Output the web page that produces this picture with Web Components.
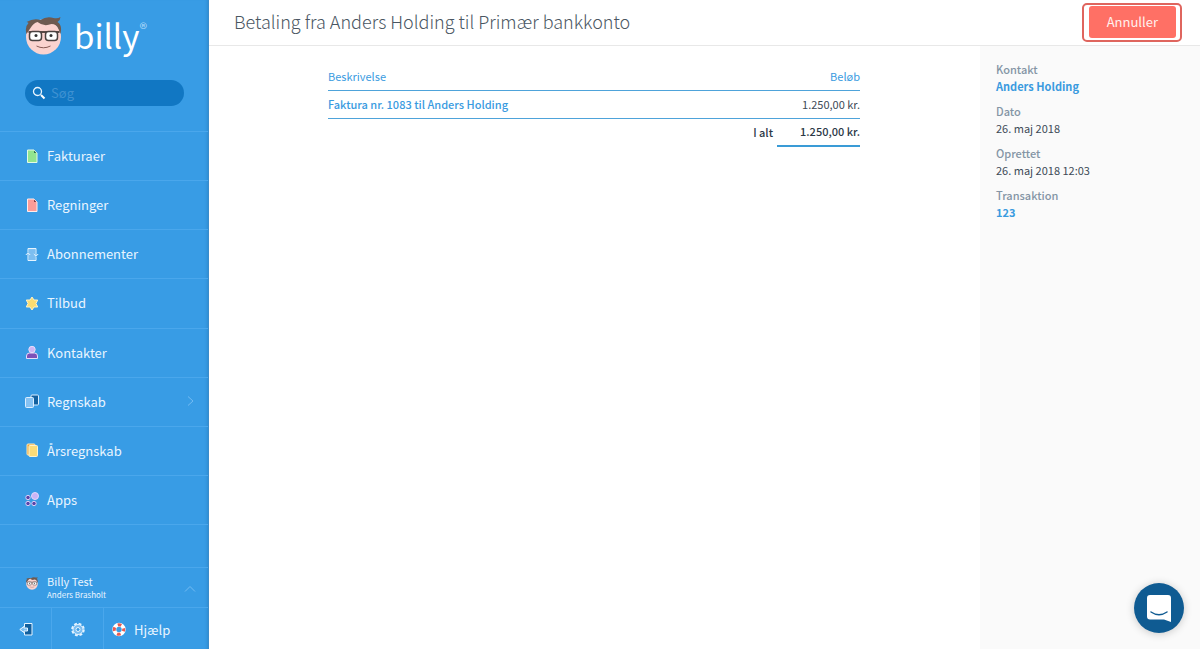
<!DOCTYPE html>
<html lang="da">
<head>
<meta charset="utf-8">
<title>Billy</title>
<meta name="viewport" content="width=device-width, initial-scale=1">
<style>
  html, body { margin: 0; height: 100%; }
  body {
    font-family: "Noto Sans CJK SC", "Noto Sans", sans-serif;
    font-size: 11px;
    line-height: 16px;
    color: #3d4a57;
    background: #fff;
    --blue: #389ce5;
    --divider: #4aa7ec;
    --link: #3a9bdf;
  }
</style>
</head>
<body>
<billy-app></billy-app>

<script>
const define = (name, html, setup) => {
  const template = document.createElement('template');
  template.innerHTML = html;
  customElements.define(name, class extends HTMLElement {
    connectedCallback() {
      if (this.shadowRoot) return;
      this.attachShadow({ mode: 'open' }).append(template.content.cloneNode(true));
      if (setup) setup(this, this.shadowRoot);
    }
  });
};

const face = `
  <circle cx="18" cy="20" r="17.5" fill="#fbd3cf"/>
  <path d="M1 17 Q-1 10 3 6 Q2 5 1 5 Q8 1 15 3 Q21 -1 28 1 Q32 2 35 0 Q35 3 32 5 Q37 8 35 17 L33 12 Q31 7 26 7 Q18 10 12 5 Q8 6 5 11 Z" fill="#6e5a50"/>
  <path d="M3 15 H34" stroke="#5a4a45" stroke-width="2"/>
  <rect x="4" y="14.500" width="12" height="9" rx="3" fill="#fff" stroke="#4b4240" stroke-width="1.500"/>
  <rect x="20" y="14.500" width="12" height="9" rx="3" fill="#fff" stroke="#4b4240" stroke-width="1.500"/>
  <circle cx="10.500" cy="18.500" r="1.500" fill="#333"/><circle cx="25.500" cy="18.500" r="1.500" fill="#333"/>
  <path d="M11 29 Q18 32.500 25 29" fill="none" stroke="#8a5c56" stroke-width="1"/>`;

const icons = {
  invoice: `<path d="M2.500 1 H9 L12 4 V13.500 H2.500 Z" fill="#92e58f" stroke="#e4fbe4" stroke-linejoin="round"/><path d="M9 1.500 V4 H11.500 Z" fill="#2f6f55"/>`,
  bill: `<path d="M2.500 1 H9 L12 4 V13.500 H2.500 Z" fill="#fb9c98" stroke="#ffeceb" stroke-linejoin="round"/><path d="M9 1.500 V4 H11.500 Z" fill="#7a3c46"/>`,
  subscription: `<path d="M3 5.500 V1.500 H11 V4 M3 11 V13.500 H11 V9.500" fill="#8cc8f4" stroke="#e6f4ff"/><rect x="3.500" y="2.500" width="7" height="10.500" fill="#7dbef0"/><path d="M3 11 V6 M.8 8 L3 5.800 L5.200 8 M11 4 V9 M8.800 7 L11 9.200 L13.200 7" fill="none" stroke="#e6f4ff"/>`,
  star: `<path d="M7 1 L9 4 H12.700 L11 7.500 L12.700 11 H9 L7 14 L5 11 H1.300 L3 7.500 L1.300 4 H5 Z" fill="#fbdc71" stroke="#fff2c4" stroke-linejoin="round"/>`,
  contact: `<path d="M1.500 13.500 V11 Q1.500 8 4.500 8 H9.500 Q12.500 8 12.500 11 V13.500 Z" fill="#7d50b8" stroke="#e6dcfa"/><circle cx="7" cy="4.500" r="3.200" fill="#cdb7f5" stroke="#e6dcfa"/>`,
  ledger: `<rect x="6" y="1" width="7.500" height="10" rx="1" fill="#12609f" stroke="#dceeff"/><rect x=".5" y="3.500" width="8" height="10" rx="1" fill="#86c2f2" stroke="#dceeff"/>`,
  annual: `<rect x="2" y="1" width="8" height="11" rx="1" fill="#e8a33c" stroke="#ffe9b0"/><rect x="4" y="2.500" width="8.500" height="11" rx="1" fill="#fbdc78" stroke="#fff2cc"/>`,
  apps: `<g fill="#5a44a8" stroke="#d9d0f7"><circle cx="3" cy="5.500" r="2.200"/><circle cx="3" cy="11.500" r="2.200"/><circle cx="9" cy="11.500" r="2.200"/></g><circle cx="10" cy="4" r="3.500" fill="#c9b4f6" stroke="#e2d8fb"/>`,
  search: `<circle cx="5.500" cy="5.500" r="4" fill="none" stroke="#e8f5ff" stroke-width="1.300"/><path d="M9 9 L12.500 12.500" stroke="#fff" stroke-width="2"/>`,
  logout: `<path d="M5.500 5 V1.500 H13 V13 H5.500 V10" fill="#12609f" stroke="#e6f4ff"/><path d="M.8 7.500 L5 4.500 V6 H8.500 V9 H5 V10.500 Z" fill="#7dbef0" stroke="#e6f4ff" stroke-linejoin="round"/>`,
  gear: `<circle cx="7" cy="7.500" r="5.800" fill="none" stroke="#e6f4ff" stroke-width="2" stroke-dasharray="2.800 1.750"/><circle cx="7" cy="7.500" r="5" fill="#7dbef0" stroke="#e6f4ff"/><circle cx="7" cy="7.500" r="2" fill="#389ce5" stroke="#e6f4ff"/>`,
  help: `<circle cx="7" cy="7.500" r="4.700" fill="none" stroke="#fff" stroke-width="4"/><circle cx="7" cy="7.500" r="4.700" fill="none" stroke="#ea5a50" stroke-width="3" stroke-dasharray="3.700 3.680" stroke-dashoffset="1.850" transform="rotate(0 7 7.500)"/>`,
  right: `<path d="M5 2.500 L10 7 L5 11.500" fill="none" stroke="#73bcf3"/>`,
  up: `<path d="M2 9.500 L7 4.500 L12 9.500" fill="none" stroke="#73bcf3"/>`
};

define('ui-icon', `
  <style>:host { display: block; width: 14px; height: 15px; flex: none; } svg { display: block; width: 100%; height: 100%; }</style>
  <svg viewBox="0 0 14 15" aria-hidden="true"></svg>`,
  (host, root) => { root.querySelector('svg').innerHTML = icons[host.getAttribute('name')]; });

define('billy-face', `
  <style>:host { display: block; flex: none; } svg { display: block; width: 100%; height: 100%; }</style>
  <svg viewBox="0 0 36 38" aria-hidden="true">${face}</svg>`);

const icon = name => {
  const element = document.createElement('ui-icon');
  element.setAttribute('name', name);
  return element;
};

define('nav-item', `
  <style>
    :host { display: block; border-bottom: 1px solid var(--divider); }
    a { display: flex; align-items: center; gap: 8px; height: 100%; padding: 0 11px 0 25px; box-sizing: border-box; color: inherit; text-decoration: none; }
    .text { flex: 1; }
  </style>
  <a href="#"><span class="text"><slot></slot></span></a>`,
  (host, root) => {
    const link = root.querySelector('a');
    link.prepend(icon(host.getAttribute('icon')));
    if (host.hasAttribute('expandable')) link.append(icon('right'));
  });

define('search-box', `
  <style>
    :host { display: block; }
    label { display: flex; align-items: center; gap: 5px; height: 26px; padding: 0 12px 0 7px; border-radius: 13px; background: #1177c3; }
    input { flex: 1; min-width: 0; padding: 0; border: 0; outline: 0; background: none; font: inherit; color: #fff; }
    input::placeholder { color: #3f92d2; opacity: 1; }
  </style>
  <label><ui-icon name="search"></ui-icon><input type="search" placeholder="Søg" aria-label="Søg"></label>`);

define('side-bar', `
  <style>
    :host { display: flex; flex-direction: column; background: var(--blue); color: #e9f5ff; font-size: 13px; line-height: 20px; border-right: 1px solid #3a8ccb; box-shadow: inset -3px 0 3px -2px #2f8bd0; }
    .brand { display: flex; align-items: center; gap: 12px; height: 44px; padding: 14px 25px 0; color: #fff; text-decoration: none; }
    billy-face { width: 37px; height: 38px; }
    .name { padding-bottom: 2px; font-size: 33px; line-height: 44px; }
    .name sup { font-size: 16px; line-height: 0; vertical-align: 14px; color: #a8d6f8; }
    search-box { margin: 22px 24px 25px 25px; }
    nav { display: grid; grid-auto-rows: 1fr; height: 393px; flex: none; border-top: 1px solid var(--divider); }
    footer { margin-top: auto; }
    .user { display: flex; align-items: center; gap: 8px; width: 100%; height: 40px; padding: 0 11px 0 25px; border: 0; border-top: 1px solid var(--divider); background: none; color: inherit; font: inherit; text-align: left; }
    .user billy-face { width: 12px; height: 13px; padding: 0 1px 8px; }
    .user ui-icon { padding-top: 4px; }
    .who { flex: 1; font-size: 11px; line-height: 14px; }
    .who small { display: block; font-size: 8px; line-height: 13px; }
    .tools { display: grid; grid-template-columns: 51px 52px 1fr; height: 41px; border-top: 1px solid var(--divider); }
    .tools a { display: flex; align-items: center; justify-content: center; gap: 8px; padding-top: 2px; color: inherit; text-decoration: none; }
    .tools a + a { border-left: 1px solid var(--divider); }
    .tools a:last-child { justify-content: flex-start; padding-left: 8px; }
  </style>
  <a class="brand" href="#"><billy-face></billy-face><span class="name">billy<sup>®</sup></span></a>
  <search-box></search-box>
  <nav aria-label="Menu">
    <nav-item icon="invoice">Fakturaer</nav-item>
    <nav-item icon="bill">Regninger</nav-item>
    <nav-item icon="subscription">Abonnementer</nav-item>
    <nav-item icon="star">Tilbud</nav-item>
    <nav-item icon="contact">Kontakter</nav-item>
    <nav-item icon="ledger" expandable>Regnskab</nav-item>
    <nav-item icon="annual">Årsregnskab</nav-item>
    <nav-item icon="apps">Apps</nav-item>
  </nav>
  <footer>
    <button class="user" type="button"><billy-face></billy-face><span class="who">Billy Test<small>Anders Brasholt</small></span><ui-icon name="up"></ui-icon></button>
    <div class="tools">
      <a href="#" aria-label="Log ud"><ui-icon name="logout"></ui-icon></a>
      <a href="#" aria-label="Indstillinger"><ui-icon name="gear"></ui-icon></a>
      <a href="#"><ui-icon name="help"></ui-icon>Hjælp</a>
    </div>
  </footer>`);

define('page-header', `
  <style>
    :host { display: flex; align-items: center; justify-content: space-between; height: 45px; padding: 0 18px 0 25px; border-bottom: 1px solid #e8e8e8; }
    h1 { margin: 0; padding-bottom: 3px; font-size: 18px; line-height: 26px; font-weight: 300; color: #4a5662; }
  </style>
  <h1><slot></slot></h1><slot name="action"></slot>`);

define('danger-button', `
  <style>
    :host { display: block; padding: 1px 4px 2px 5px; border: 2px solid #df655e; border-radius: 5px; }
    button { display: block; height: 32px; padding: 0 18px; border: 0; border-radius: 3px; background: #ff7065; color: #fff0ee; font: inherit; font-size: 13px; line-height: 32px; }
  </style>
  <button type="button"><slot></slot></button>`);

define('payment-table', `
  <style>
    :host { display: block; padding: 17px 25px 17px 24px; }
    table { width: 100%; max-width: 532px; margin: 0 auto; border-collapse: collapse; }
    th, td { height: 25px; padding: 0 0 2px; text-align: left; font-weight: 400; }
    thead th { color: var(--link); }
    thead th, tbody td { border-bottom: 1px solid #4ea3da; }
    .amount { width: 83px; text-align: right; }
    a { color: var(--link); font-weight: 500; text-decoration: none; }
    tfoot th, tfoot td { height: 24px; font-weight: 500; text-align: right; color: #2c3947; }
    tfoot th { padding-right: 4px; }
    tfoot .amount { border-bottom: 2px solid #3a9bd6; }
  </style>
  <table>
    <thead><tr><th>Beskrivelse</th><th class="amount">Beløb</th></tr></thead>
    <tbody><tr><td><a href="#">Faktura nr. 1083 til Anders Holding</a></td><td class="amount">1.250,00 kr.</td></tr></tbody>
    <tfoot><tr><th scope="row">I alt</th><td class="amount">1.250,00 kr.</td></tr></tfoot>
  </table>`);

define('payment-details', `
  <style>
    :host { display: block; padding: 15px 16px; background: #fafafa; box-sizing: border-box; }
    dl { display: grid; gap: 8px; margin: 0; }
    dt, dd { margin: 0; line-height: 17px; }
    dt { font-weight: 500; color: #8495a5; }
    a { color: var(--link); font-weight: 700; text-decoration: none; }
  </style>
  <dl>
    <div><dt>Kontakt</dt><dd><a href="#">Anders Holding</a></dd></div>
    <div><dt>Dato</dt><dd>26. maj 2018</dd></div>
    <div><dt>Oprettet</dt><dd>26. maj 2018 12:03</dd></div>
    <div><dt>Transaktion</dt><dd><a href="#">123</a></dd></div>
  </dl>`);

define('chat-launcher', `
  <style>
    :host { display: block; position: fixed; right: 16px; bottom: 16px; }
    button { display: grid; place-items: center; width: 50px; height: 50px; padding: 0; border: 0; border-radius: 50%; background: #0f5b92; box-shadow: 0 1px 8px rgba(0, 0, 0, .2); }
    svg { display: block; width: 24px; height: 28px; }
  </style>
  <button type="button" aria-label="Chat">
    <svg viewBox="0 0 24 28" aria-hidden="true"><path d="M3 1 H21 Q24 1 24 4 V28 L17 25.500 H3 Q0 25.500 0 22.500 V4 Q0 1 3 1 Z" fill="#fff"/><path d="M4 18 Q12 23.500 20 18" fill="none" stroke="#0f5b92" stroke-width="1.500" stroke-linecap="round"/></svg>
  </button>`);

define('billy-app', `
  <style>
    :host { display: grid; grid-template-columns: 209px minmax(0, 1fr); min-height: 100%; }
    main { display: grid; grid-template-rows: auto 1fr; }
    .body { display: grid; grid-template-columns: minmax(0, 1fr) 220px; }
  </style>
  <side-bar></side-bar>
  <main>
    <page-header>Betaling fra Anders Holding til Primær bankkonto<danger-button slot="action">Annuller</danger-button></page-header>
    <div class="body"><payment-table></payment-table><payment-details></payment-details></div>
  </main>
  <chat-launcher></chat-launcher>`);
</script>
</body>
</html>
